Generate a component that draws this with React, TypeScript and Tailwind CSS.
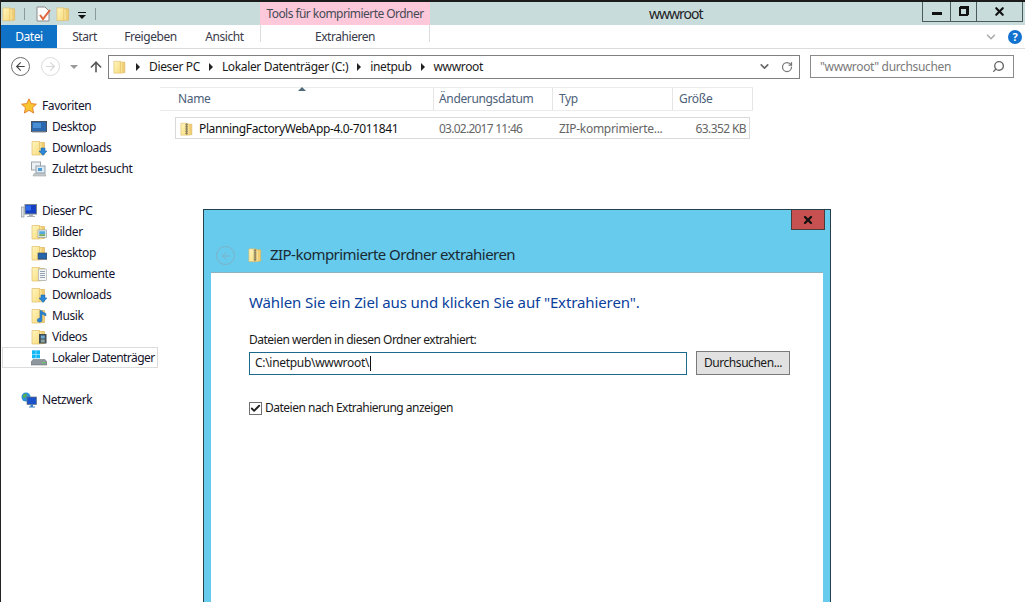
import { ArrowLeft, ArrowRight, ArrowUp, Check, ChevronDown, RotateCw, Search, X } from "lucide-react";

const FONT = "font-['Noto_Sans',sans-serif]";

// Gelber Explorer-Ordner, optional mit kleinem Overlay rechts unten.
function Folder({ overlay, className = "h-4 w-4" }: { overlay?: React.ReactNode; className?: string }) {
  return (
    <svg viewBox="0 0 16 16" className={`shrink-0 ${className}`}>
      <defs>
        <linearGradient id="leaf" x1="0" y1="0" x2="1" y2="1">
          <stop offset="0" stopColor="#fff5bd" />
          <stop offset="1" stopColor="#f8dd80" />
        </linearGradient>
      </defs>
      <path d="M8 2.5 H13.5 V14.5 H8 Z" fill="#f3cf74" stroke="#dcb45c" strokeWidth="0.7" />
      <path d="M1 1.5 H8.5 V15 H1 Z" fill="url(#leaf)" stroke="#e0bd6a" strokeWidth="0.7" />
      <path d="M8.5 1.5 L11 3.5 V15 L8.5 15 Z" fill="#f9e294" stroke="#e0bd6a" strokeWidth="0.4" />
      {overlay}
    </svg>
  );
}

function Zip({ className = "h-4 w-4" }: { className?: string }) {
  return (
    <Folder
      className={className}
      overlay={<path d="M7.5 1.5 V14.5 M6 3 H9 M6 5 H9 M6 7 H9 M6 9 H9 M6 11 H9 M6 13 H9" stroke="#77705a" strokeWidth="0.9" fill="none" />}
    />
  );
}

const downloadOverlay = <path d="M10 8 H14 V11 H16 L12 15.5 L8 11 H10 Z" fill="#2b86d8" stroke="#135f9f" strokeWidth="0.5" />;

const sidebarIcons: Record<string, React.ReactNode> = {
  star: (
    <svg viewBox="0 0 16 16" className="h-4 w-4 shrink-0">
      <path d="M8 0.8 L10.2 5.6 L15.4 6.2 L11.5 9.7 L12.6 15 L8 12.3 L3.4 15 L4.5 9.7 L0.6 6.2 L5.8 5.6 Z" fill="#fbc531" stroke="#e07b22" strokeWidth="0.9" />
    </svg>
  ),
  desktop: (
    <svg viewBox="0 0 16 16" className="h-4 w-4 shrink-0">
      <rect x="0.5" y="2.5" width="15" height="10" fill="#2c68ad" stroke="#4b5563" />
      <rect x="2" y="4" width="8" height="5" fill="#4a8ed3" />
      <rect x="1" y="12.5" width="14" height="1" fill="#8b93a0" />
    </svg>
  ),
  recent: (
    <svg viewBox="0 0 16 16" className="h-4 w-4 shrink-0">
      <rect x="0.5" y="1" width="9" height="8" fill="#eef1f3" stroke="#9aa3a8" />
      <rect x="5" y="5" width="9" height="7" fill="#dfe9f2" stroke="#8ea0ad" />
      <rect x="7" y="7" width="4" height="3" fill="#4a9bd6" />
      <path d="M2 15 H15 L14 12.5 H3 Z" fill="#c4c8cb" stroke="#979c9f" strokeWidth="0.5" />
    </svg>
  ),
  pc: (
    <svg viewBox="0 0 16 16" className="h-4 w-4 shrink-0">
      <rect x="0.5" y="4" width="2.5" height="10" fill="#dfe3e6" stroke="#7f8a91" strokeWidth="0.6" />
      <rect x="4" y="1.5" width="11.5" height="9.5" fill="#1540c4" stroke="#7c8790" />
      <rect x="5" y="2.5" width="5" height="5" fill="#2f6bea" />
      <path d="M8 11 H12 V13 H14 V14 H6 V13 H8 Z" fill="#a9b0b5" />
    </svg>
  ),
  pictures: <Folder overlay={<g><rect x="7" y="6" width="8.5" height="7.5" fill="#f4f7f9" stroke="#7c8a95" strokeWidth="0.6" /><rect x="8.2" y="7.2" width="6" height="3" fill="#55a9dc" /><rect x="8.2" y="10.2" width="6" height="2" fill="#79a95b" /></g>} />,
  desktopFolder: <Folder overlay={<g><rect x="7" y="8" width="9" height="6" fill="#2465ad" stroke="#3b4652" strokeWidth="0.6" /><rect x="7" y="14" width="9" height="1" fill="#7c8590" /></g>} />,
  documents: <Folder overlay={<g><rect x="7.5" y="3" width="8" height="11.5" fill="#f5f6f7" stroke="#9aa3aa" strokeWidth="0.6" /><path d="M9 5.5 H14 M9 7.5 H14 M9 9.5 H14 M9 11.5 H14" stroke="#7a8a99" strokeWidth="0.8" /></g>} />,
  downloads: <Folder overlay={downloadOverlay} />,
  music: <Folder overlay={<path d="M11 2 V12 A2.4 2 0 1 1 9 10.2 V2 Q13 5 15 5.5 V8 Q12.5 7 11 6" fill="#2a86d6" stroke="#1d5f9e" strokeWidth="0.4" />} />,
  videos: <Folder overlay={<g><rect x="8" y="5" width="7.5" height="9.5" fill="#3f4b55" /><rect x="9.8" y="6.5" width="4" height="3" fill="#6fa8cf" /><rect x="9.8" y="10.5" width="4" height="3" fill="#8aa39c" /></g>} />,
  drive: (
    <svg viewBox="0 0 16 16" className="h-4 w-4 shrink-0">
      <rect x="1" y="0.3" width="3.8" height="3.8" fill="#12b8f5" />
      <rect x="5.2" y="0.3" width="3.8" height="3.8" fill="#12b8f5" />
      <rect x="1" y="4.5" width="3.8" height="3.8" fill="#12b8f5" />
      <rect x="5.2" y="4.5" width="3.8" height="3.8" fill="#12b8f5" />
      <path d="M2 9.5 H14 L16 12 V15 H0 V12 Z" fill="#8e979d" stroke="#626a70" strokeWidth="0.5" />
      <rect x="11" y="12" width="3" height="1.2" fill="#5fd15f" />
    </svg>
  ),
  network: (
    <svg viewBox="0 0 16 16" className="h-4 w-4 shrink-0">
      <circle cx="5" cy="5" r="4.5" fill="#2d8fd8" />
      <path d="M2 3 Q4 1 6 2 L5 5 L2 6 Z" fill="#55b04f" />
      <rect x="6" y="5" width="9.5" height="7.5" fill="#1a50c9" stroke="#66727c" strokeWidth="0.7" />
      <path d="M9.5 12.5 H12 V14.5 H14 V15.5 H8 V14.5 H9.5 Z" fill="#3b7fc4" />
    </svg>
  ),
};

function NavRow({ icon, label, group, selected, mt }: { icon: string; label: string; group?: boolean; selected?: boolean; mt?: string }) {
  return (
    <div
      className={`flex h-[21px] items-center whitespace-nowrap border ${mt ?? ""} ${
        selected ? "border-[#dcdcdc]" : "border-transparent"
      } ${group ? "pl-[18px]" : "pl-[28px]"}`}
    >
      {sidebarIcons[icon]}
      <span
        className={`${group ? "ml-[5px]" : "ml-[5px]"} text-[12px] leading-none text-[#14142e] ${
          selected ? "tracking-[-0.58px]" : "tracking-[-0.4px]"
        }`}
      >
        {label}
      </span>
    </div>
  );
}

function Crumb({ label }: { label: string }) {
  return (
    <>
      <span className="ml-[9px] mr-[9px] h-0 w-0 border-y-[4px] border-l-[4px] border-y-transparent border-l-[#222]" />
      <span>{label}</span>
    </>
  );
}

function HeaderCell({ label, className }: { label: string; className: string }) {
  return (
    <div className={`flex items-center border-r border-[#e5e5e5] text-[12px] tracking-[-0.35px] text-[#4c607a] ${className}`}>{label}</div>
  );
}

export default function App() {
  return (
    <div className={`${FONT} relative h-[602px] w-[1025px] overflow-hidden border-l border-[#222] bg-white`}>
      <div className="h-[2px] bg-[#1b1b1b]" />

      {/* Titelleiste */}
      <div className="flex h-[23px] bg-[#c9dcdc]">
        <div className="flex w-[259px] items-center">
          <Folder className="ml-[1px] h-[16px] w-[15px]" />
          <span className="ml-[7px] h-3 w-px bg-[#8a9a9a]" />
          <svg viewBox="0 0 16 16" className="ml-[10px] h-4 w-4">
            <path d="M2 1 H10 L14 5 V15 H2 Z" fill="#fdfdfd" stroke="#8d8d8d" />
            <path d="M5 9 L8 13 L15 4" fill="none" stroke="#e0653a" strokeWidth="2" />
          </svg>
          <Folder className="ml-[5px] h-[16px] w-[15px]" />
          <span className="ml-[7px] mt-[3px] h-[7px] w-[8px] border-t border-[#111]">
            <span className="mx-auto mt-[2px] block h-0 w-0 border-x-[4px] border-t-[4px] border-x-transparent border-t-[#111]" />
          </span>
          <span className="ml-[9px] h-3 w-px bg-[#8a9a9a]" />
        </div>
        <div className="flex w-[170px] items-center justify-center whitespace-nowrap bg-[#fdc8da] text-[12px] tracking-[-0.55px] text-[#444a55]">
          Tools für komprimierte Ordner
        </div>
        <div className="flex flex-1 items-center pl-[219px] text-[14px] tracking-[-1px] text-[#1c2226]">wwwroot</div>
        <div className="mr-[2px] flex h-[20px] w-[101px] border-x border-b border-[#4a5a5e]">
          <div className="flex w-[28px] items-center justify-center border-r border-[#4a5a5e]">
            <span className="mt-[3px] h-[3px] w-[10px] bg-[#111]" />
          </div>
          <div className="flex w-[26px] items-center justify-center border-r border-[#4a5a5e]">
            <span className="relative h-[9px] w-[9px] border-2 border-[#111]">
              <span className="absolute -right-[3px] -top-[3px] h-[9px] w-[9px] border-r border-t border-[#111]" />
            </span>
          </div>
          <div className="flex flex-1 items-center justify-center">
            <X className="h-[13px] w-[13px] text-[#111]" strokeWidth={4} />
          </div>
        </div>
      </div>

      {/* Menüband */}
      <div className="flex h-[24px] border-b border-[#dcdcdc] text-[12px] tracking-[-0.45px] text-[#3a3a4a]">
        <div className="flex w-[56px] items-center justify-center bg-[#0f72c6] text-white">Datei</div>
        <div className="flex w-[55px] items-center justify-center">Start</div>
        <div className="flex w-[75px] items-center justify-center pl-[2px]">Freigeben</div>
        <div className="flex w-[73px] items-center justify-center pl-[2px]">Ansicht</div>
        <div className="mb-[6px] flex w-[170px] items-center justify-center border-x border-[#dcdcdc] pt-[6px]">Extrahieren</div>
        <div className="flex flex-1 items-center justify-end pr-[3px]">
          <ChevronDown className="mr-[10px] h-[14px] w-[14px] text-[#a8a8a8]" strokeWidth={2.5} />
          <span className="flex h-[14px] w-[14px] items-center justify-center rounded-full bg-[#1172d0] text-[11px] font-bold leading-none text-white">?</span>
        </div>
      </div>

      {/* Adresszeile */}
      <div className="flex h-[38px] items-center pb-[3px]">
        <span className="ml-[10px] flex h-[19px] w-[19px] items-center justify-center rounded-full border border-[#6d6d6d]">
          <ArrowLeft className="h-[13px] w-[13px] text-[#444]" strokeWidth={2} />
        </span>
        <span className="ml-[11px] flex h-[19px] w-[19px] items-center justify-center rounded-full border border-[#dcdcdc]">
          <ArrowRight className="h-[13px] w-[13px] text-[#d6d6d6]" strokeWidth={2} />
        </span>
        <span className="ml-[10px] h-0 w-0 border-x-[4px] border-t-[4px] border-x-transparent border-t-[#999]" />
        <ArrowUp className="ml-[10px] h-[16px] w-[16px] text-[#555]" strokeWidth={2.4} />
        <div className="ml-[4px] flex h-[24px] w-[692px] items-center border border-[#7f7f7f] pl-[4px] text-[12px] tracking-[-0.35px] text-[#1a1a1a]">
          <Folder className="h-4 w-[14px]" />
          <Crumb label="Dieser PC" />
          <Crumb label="Lokaler Datenträger (C:)" />
          <Crumb label="inetpub" />
          <Crumb label="wwwroot" />
          <ChevronDown className="ml-auto h-[13px] w-[13px] text-[#666]" strokeWidth={3} />
          <RotateCw className="ml-[10px] mr-[6px] h-[12px] w-[12px] text-[#777]" strokeWidth={2.5} />
        </div>
        <div className="ml-[10px] flex h-[23px] w-[204px] items-center justify-between border border-[#8a8a8a] pl-[9px] pr-[8px] text-[12px] tracking-[-0.34px] text-[#7a7a7a]">
          <span>"wwwroot" durchsuchen</span>
          <Search className="h-[13px] w-[13px] -scale-x-100 text-[#666]" strokeWidth={2.5} />
        </div>
      </div>

      <div className="flex">
        {/* Navigationsbereich */}
        <div className="w-[159px] pl-[1px] pr-[2px] pt-[8px]">
          <NavRow icon="star" label="Favoriten" group />
          <NavRow icon="desktop" label="Desktop" />
          <NavRow icon="downloads" label="Downloads" />
          <NavRow icon="recent" label="Zuletzt besucht" />
          <NavRow icon="pc" label="Dieser PC" group mt="mt-[21px]" />
          <NavRow icon="pictures" label="Bilder" />
          <NavRow icon="desktopFolder" label="Desktop" />
          <NavRow icon="documents" label="Dokumente" />
          <NavRow icon="downloads" label="Downloads" />
          <NavRow icon="music" label="Musik" />
          <NavRow icon="videos" label="Videos" />
          <NavRow icon="drive" label="Lokaler Datenträger" selected />
          <NavRow icon="network" label="Netzwerk" group mt="mt-[21px]" />
        </div>

        {/* Dateiliste */}
        <div className="w-[593px]">
          <div className="relative flex h-[24px] border-y border-[#ececec]">
            <span className="absolute left-[138px] -top-px h-0 w-0 border-x-[4px] border-b-[4px] border-x-transparent border-b-[#4f6a78]" />
            <HeaderCell label="Name" className="w-[274px] pl-[18px]" />
            <HeaderCell label="Änderungsdatum" className="w-[119px] pl-[5px]" />
            <HeaderCell label="Typ" className="w-[120px] pl-[6px]" />
            <HeaderCell label="Größe" className="w-[80px] pl-[6px]" />
          </div>
          <div className="ml-[15px] mt-[6px] flex h-[22px] w-[575px] items-center border border-[#d9d9d9] pt-px text-[12px]">
            <div className="flex w-[258px] items-center pl-[4px] tracking-[-0.37px] text-[#111]">
              <Zip className="h-4 w-[14px]" />
              <span className="ml-[5px] whitespace-nowrap">PlanningFactoryWebApp-4.0-7011841</span>
            </div>
            <div className="w-[120px] pl-[5px] tracking-[-0.75px] text-[#666]">03.02.2017 11:46</div>
            <div className="w-[120px] whitespace-nowrap pl-[5px] tracking-[-0.3px] text-[#666]">ZIP-komprimierte...</div>
            <div className="flex-1 pr-[3px] text-right tracking-[-0.6px] text-[#666]">63.352 KB</div>
          </div>
        </div>
      </div>

      {/* Dialogfenster liegt über dem Explorer */}
      <div className="absolute left-[202px] top-[209px] flex h-[393px] w-[628px] flex-col border-x border-t border-[#23404c] bg-[#66cbed] px-[7px]">
        <div className="absolute right-[5px] top-0 flex h-[20px] w-[34px] items-center justify-center border-x border-b border-[#4c3b3b] bg-[#c75050]">
          <X className="h-[12px] w-[12px] text-[#111]" strokeWidth={4.5} />
        </div>
        <div className="flex h-[62px] items-end pb-[7px] pl-[5px]">
          <span className="flex h-[19px] w-[19px] items-center justify-center rounded-full border border-[#7fb2c6]">
            <ArrowLeft className="h-[12px] w-[12px] text-[#7fb2c6]" strokeWidth={2} />
          </span>
          <Zip className="ml-[13px] mb-[2px] h-4 w-[15px]" />
          <span className="ml-[7px] text-[15px] leading-[21px] tracking-[-0.54px] text-[#1a2a33]">ZIP-komprimierte Ordner extrahieren</span>
        </div>
        <div className="flex-1 border-t border-[#8fb1c1] bg-white pl-[38px] pt-[19px]">
          <div className="text-[15px] leading-[21px] tracking-[-0.11px] text-[#0a3f9c]">Wählen Sie ein Ziel aus und klicken Sie auf "Extrahieren".</div>
          <div className="mt-[18px] text-[12px] leading-[18px] tracking-[-0.5px] text-[#1a1a1a]">Dateien werden in diesen Ordner extrahiert:</div>
          <div className="mt-[2px] flex items-center">
            <div className="flex h-[23px] w-[438px] items-center border border-[#1c6a8c] pl-[5px] text-[12px] tracking-[-0.3px] text-[#1a1a1a]">
              C:\inetpub\wwwroot\
              <span className="ml-px h-[15px] w-px bg-[#111]" />
            </div>
            <div className="ml-[9px] flex h-[24px] w-[94px] items-center justify-center border border-[#7a7a7a] bg-[#e1e1e1] text-[12px] tracking-[-0.45px] text-[#1a1a1a]">
              Durchsuchen...
            </div>
          </div>
          <div className="mt-[24px] flex items-center">
            <span className="flex h-[13px] w-[13px] items-center justify-center border border-[#707070]">
              <Check className="h-[11px] w-[11px] text-[#222]" strokeWidth={4} />
            </span>
            <span className="ml-[3px] text-[12px] tracking-[-0.5px] text-[#1a1a1a]">Dateien nach Extrahierung anzeigen</span>
          </div>
        </div>
      </div>
    </div>
  );
}
